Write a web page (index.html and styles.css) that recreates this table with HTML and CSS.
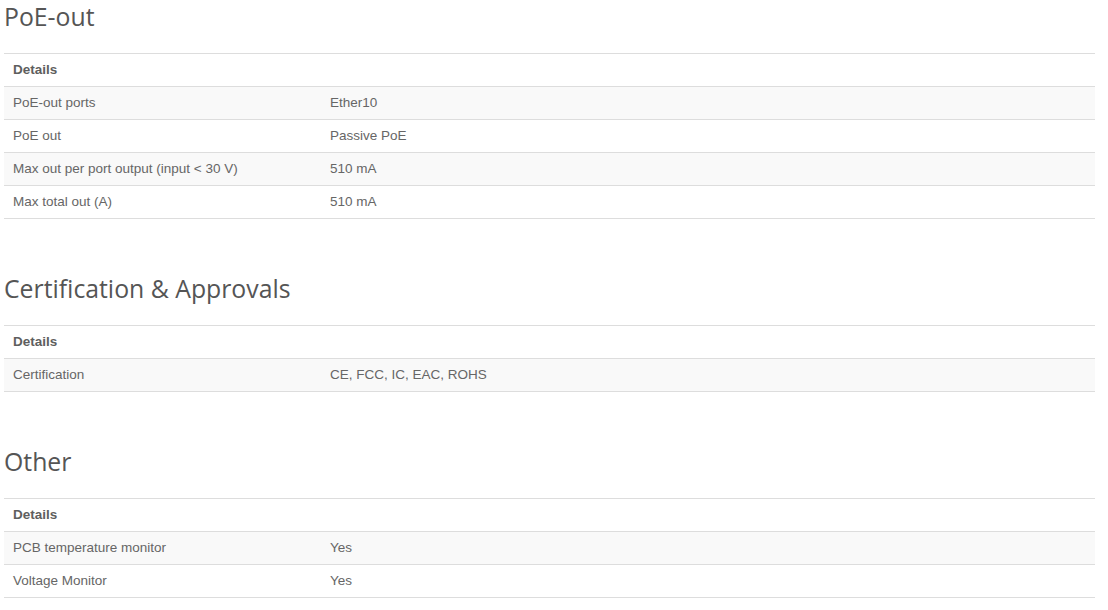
FILE: index.html
```html
<!DOCTYPE html>
<html>
<head>
<meta charset="utf-8">
<link rel="stylesheet" href="styles.css">
</head>
<body>
<section class="spec">
  <h2 class="spec-title">PoE-out</h2>
  <table class="spec-table">
    <thead><tr><th colspan="2">Details</th></tr></thead>
    <tbody>
      <tr><td class="k">PoE-out ports</td><td>Ether10</td></tr>
      <tr><td class="k">PoE out</td><td>Passive PoE</td></tr>
      <tr><td class="k">Max out per port output (input &lt; 30 V)</td><td>510 mA</td></tr>
      <tr><td class="k">Max total out (A)</td><td>510 mA</td></tr>
    </tbody>
  </table>
</section>
<section class="spec">
  <h2 class="spec-title">Certification &amp; Approvals</h2>
  <table class="spec-table">
    <thead><tr><th colspan="2">Details</th></tr></thead>
    <tbody>
      <tr><td class="k">Certification</td><td>CE, FCC, IC, EAC, ROHS</td></tr>
    </tbody>
  </table>
</section>
<section class="spec">
  <h2 class="spec-title">Other</h2>
  <table class="spec-table">
    <thead><tr><th colspan="2">Details</th></tr></thead>
    <tbody>
      <tr><td class="k">PCB temperature monitor</td><td>Yes</td></tr>
      <tr><td class="k">Voltage Monitor</td><td>Yes</td></tr>
    </tbody>
  </table>
</section>
</body>
</html>
```
FILE: styles.css
```css
html, body {
  margin: 0;
  background: #fff;
}
body {
  padding: 1px 13px 0 4px;
  font-family: "Liberation Sans", Arial, sans-serif;
  color: #666;
}
.spec {
  margin-bottom: 54px;
}
.spec:last-child {
  margin-bottom: 0;
}
.spec-title {
  margin: 0 0 22px 0;
  font-family: "Open Sans", sans-serif;
  font-weight: 400;
  font-size: 24.8px;
  line-height: 30px;
  color: #555;
}
.spec-table {
  width: 100%;
  border-collapse: collapse;
  font-size: 13.5px;
  line-height: 16px;
}
.spec-table th,
.spec-table td {
  padding: 8px 9px;
  text-align: left;
  border-top: 1px solid #ddd;
  vertical-align: top;
}
.spec-table th {
  font-weight: bold;
  color: #5e5e5e;
}
.spec-table tbody tr:last-child td {
  border-bottom: 1px solid #ddd;
}
.spec-table tbody tr:nth-child(odd) td {
  background: #f9f9f9;
}
.spec-table td.k {
  width: 299px;
}
```
